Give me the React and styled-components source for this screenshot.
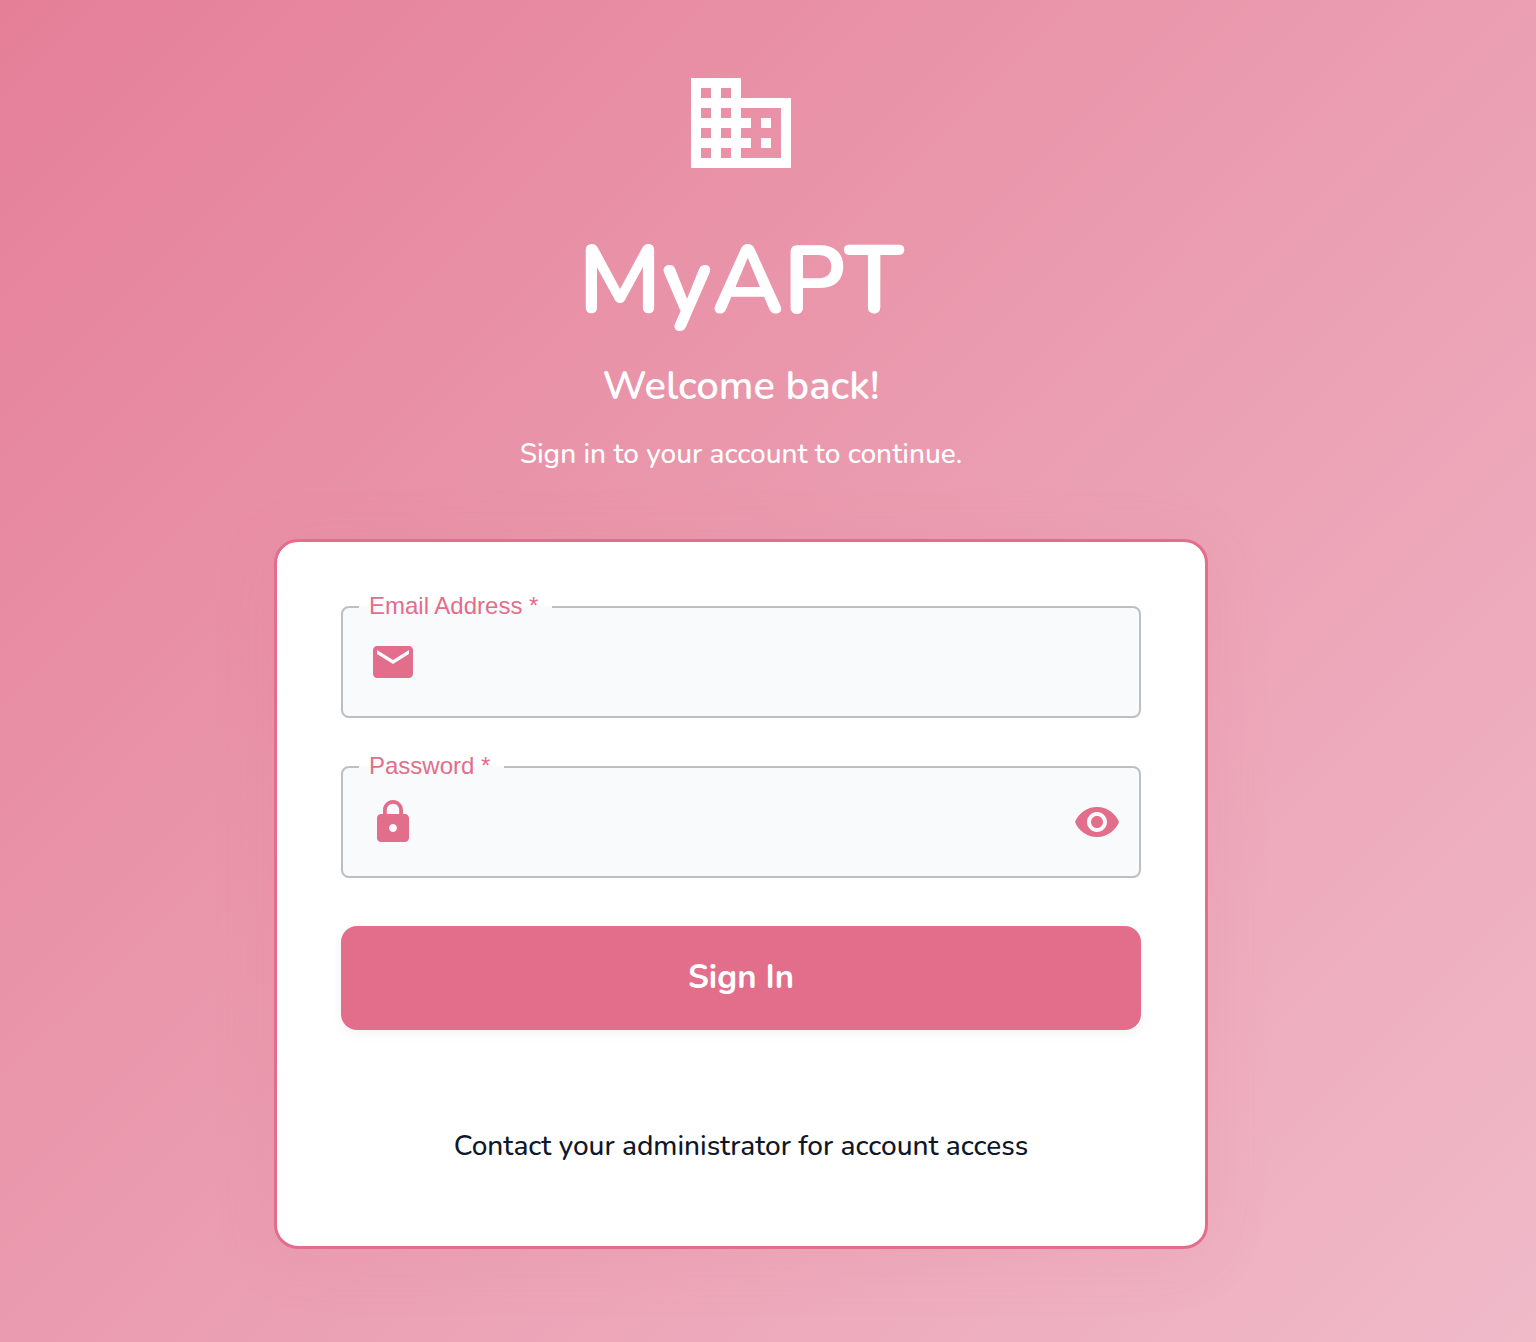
import React, { useState } from "react";
import styled, { createGlobalStyle } from "styled-components";
import { MdBusiness, MdEmail, MdLock, MdVisibility, MdVisibilityOff } from "react-icons/md";

const rose = "#e26e8c";
const brandFont = 'Nunito, Lato, "Open Sans", sans-serif';

const GlobalStyle = createGlobalStyle`
  *, *::before, *::after { box-sizing: border-box; }
  body { margin: 0; font-family: ${brandFont}; }
`;

const Page = styled.main`
  min-height: 100vh;
  padding: 63px 54px 93px 0;
  display: flex;
  flex-direction: column;
  align-items: center;
  background: linear-gradient(135deg, #e57f98 0%, #f0bac9 100%);
`;

const Header = styled.header`
  display: flex;
  flex-direction: column;
  align-items: center;
  margin-bottom: 65px;
  color: #fff;
  text-align: center;

  svg { display: block; }
`;

const Brand = styled.h1`
  margin: 39px 0 20px;
  font-size: 96px;
  line-height: 120px;
  font-weight: 700;
`;

const Welcome = styled.h2`
  margin: 0 0 24px;
  font-size: 40px;
  line-height: 48px;
  font-weight: 600;
`;

const Hint = styled.p`
  margin: 0;
  font-size: 28px;
  line-height: 40px;
  font-weight: 500;
`;

const Card = styled.form`
  width: 100%;
  max-width: 934px;
  padding: 64px;
  display: flex;
  flex-direction: column;
  gap: 48px;
  background: #fff;
  border: 3px solid ${rose};
  border-radius: 24px;
  box-shadow: 0 8px 64px rgba(226, 109, 139, 0.12);
`;

const Field = styled.div`
  position: relative;
  display: flex;
  align-items: center;
  height: 112px;
  padding: 0 20px 0 28px;
  background: #f8fafc;
  border-radius: 8px;
  color: ${rose};

  svg { display: block; flex: none; }
`;

const Outline = styled.fieldset`
  position: absolute;
  inset: -10px 0 0;
  margin: 0;
  padding: 0 16px;
  border: 2px solid #bdbfc1;
  border-radius: 8px;
  pointer-events: none;
`;

const Legend = styled.legend`
  padding: 0 14px 2px 10px;
  font: 24px/20px "Liberation Sans", Arial, sans-serif;

  label { display: block; }
`;

const Input = styled.input`
  flex: 1;
  min-width: 0;
  height: 100%;
  padding: 0 16px;
  border: 0;
  outline: 0;
  background: transparent;
  color: #0f172a;
  font: 32px/48px ${brandFont};
`;

const IconButton = styled.button`
  padding: 0;
  border: 0;
  background: none;
  color: inherit;
  cursor: pointer;
`;

const Submit = styled.button`
  height: 104px;
  border: 0;
  border-radius: 16px;
  background: ${rose};
  box-shadow: 0 4px 12px rgba(0, 0, 0, 0.05);
  color: #fff;
  font: 700 33px/56px ${brandFont};
  cursor: pointer;
`;

const Contact = styled.p`
  margin: 32px 0 0;
  padding: 16px 0;
  color: #0f172a;
  font-size: 28px;
  line-height: 40px;
  font-weight: 500;
  text-align: center;
`;

function OutlinedField({ id, label, icon, children, ...inputProps }) {
  return (
    <Field>
      {icon}
      <Input id={id} required {...inputProps} />
      {children}
      <Outline>
        <Legend>
          <label htmlFor={id}>{label} *</label>
        </Legend>
      </Outline>
    </Field>
  );
}

export default function App() {
  const [visible, setVisible] = useState(false);

  return (
    <>
      <GlobalStyle />
      <Page>
        <Header>
          <MdBusiness size={120} />
          <Brand>MyAPT</Brand>
          <Welcome>Welcome back!</Welcome>
          <Hint>Sign in to your account to continue.</Hint>
        </Header>
        <Card onSubmit={(event) => event.preventDefault()}>
          <OutlinedField
            id="email"
            label="Email Address"
            type="email"
            autoComplete="email"
            icon={<MdEmail size={48} />}
          />
          <OutlinedField
            id="password"
            label="Password"
            type={visible ? "text" : "password"}
            autoComplete="current-password"
            icon={<MdLock size={48} />}
          >
            <IconButton
              type="button"
              aria-label="Toggle password visibility"
              onClick={() => setVisible(!visible)}
            >
              {visible ? <MdVisibilityOff size={48} /> : <MdVisibility size={48} />}
            </IconButton>
          </OutlinedField>
          <Submit type="submit">Sign In</Submit>
          <Contact>Contact your administrator for account access</Contact>
        </Card>
      </Page>
    </>
  );
}
